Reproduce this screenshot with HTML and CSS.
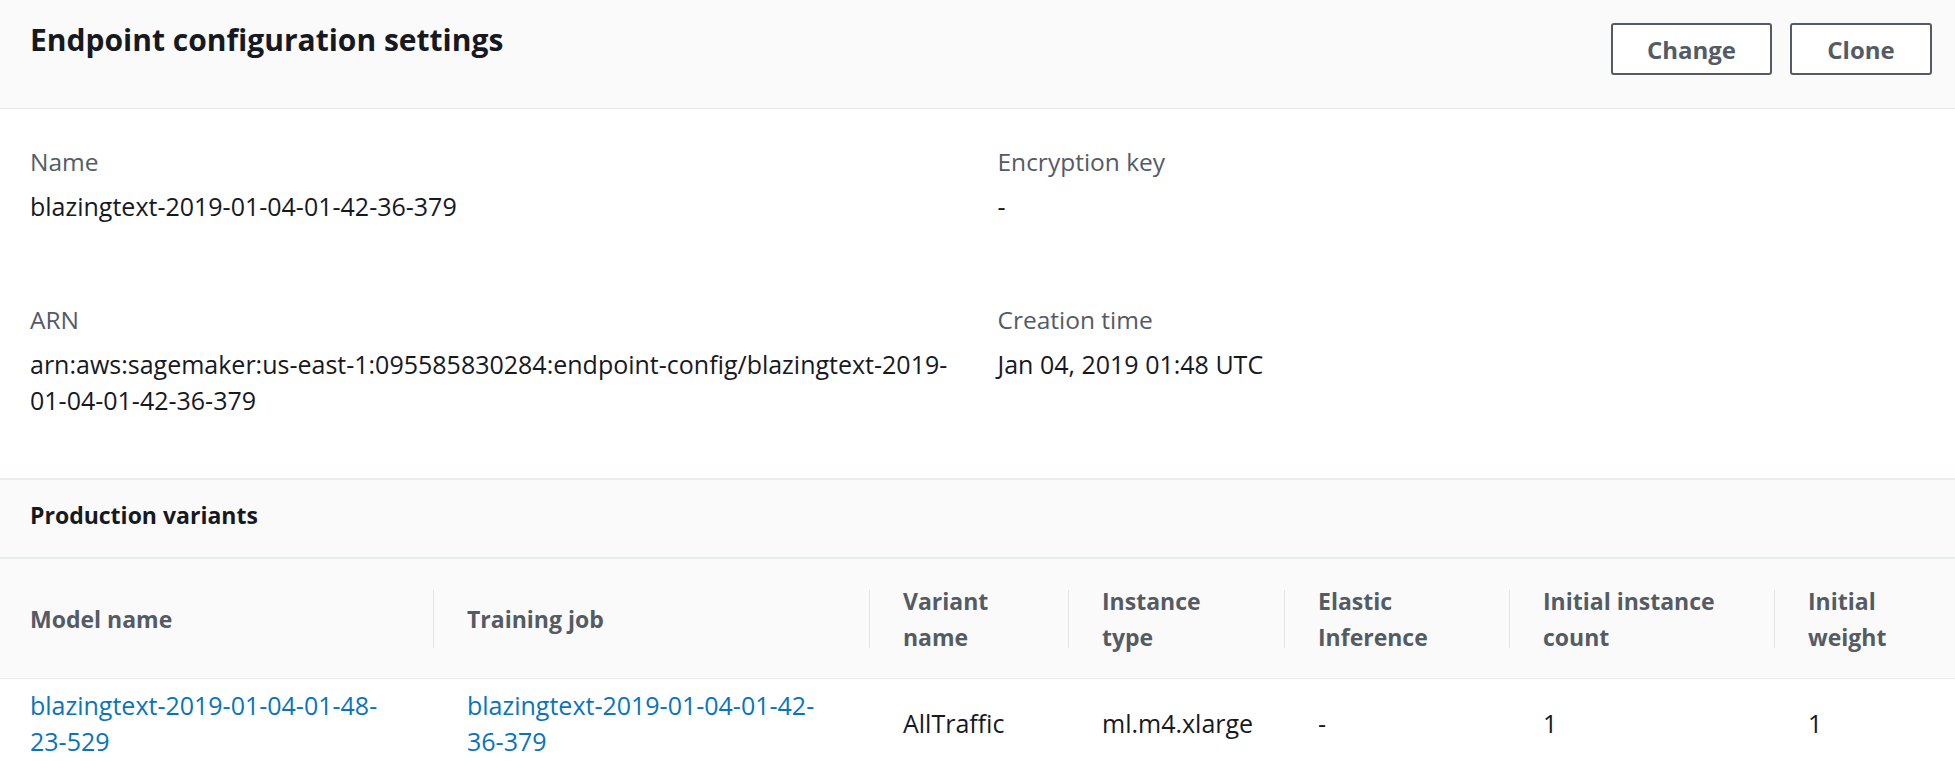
FILE: index.html
```html
<!DOCTYPE html>
<html lang="en">
<head>
<meta charset="utf-8">
<title>Endpoint configuration settings</title>
<link rel="stylesheet" href="styles.css">
</head>
<body>
<div class="panel">
  <div class="panel-header">
    <h2 class="title">Endpoint configuration settings</h2>
    <div class="actions">
      <button class="btn btn-change">Change</button>
      <button class="btn btn-clone">Clone</button>
    </div>
  </div>
  <div class="details">
    <div class="kv">
      <div class="label">Name</div>
      <div class="value">blazingtext-2019-01-04-01-42-36-379</div>
    </div>
    <div class="kv">
      <div class="label">Encryption key</div>
      <div class="value">-</div>
    </div>
    <div class="kv">
      <div class="label">ARN</div>
      <div class="value">arn:aws:sagemaker:us-east-1:095585830284:endpoint-config/blazingtext-2019-01-04-01-42-36-379</div>
    </div>
    <div class="kv">
      <div class="label">Creation time</div>
      <div class="value">Jan 04, 2019 01:48 UTC</div>
    </div>
  </div>
  <div class="section-header">Production variants</div>
  <div class="table">
    <div class="th first">Model name</div>
    <div class="th">Training job</div>
    <div class="th">Variant name</div>
    <div class="th">Instance type</div>
    <div class="th">Elastic Inference</div>
    <div class="th">Initial instance count</div>
    <div class="th">Initial weight</div>

    <div class="td first"><a class="link" href="#">blazingtext-2019-01-04-01-48-23-529</a></div>
    <div class="td"><a class="link" href="#">blazingtext-2019-01-04-01-42-36-379</a></div>
    <div class="td">AllTraffic</div>
    <div class="td">ml.m4.xlarge</div>
    <div class="td">-</div>
    <div class="td">1</div>
    <div class="td">1</div>
  </div>
</div>
</body>
</html>
```
FILE: styles.css
```css
* {
  box-sizing: border-box;
}

html, body {
  margin: 0;
  padding: 0;
  background: #ffffff;
}

body {
  font-family: "Open Sans", "Noto Sans", "Liberation Sans", sans-serif;
  font-size: 25px;
  line-height: 36px;
  color: #16191f;
}

.panel {
  width: 100%;
  overflow: hidden;
}

.panel-header {
  display: flex;
  justify-content: space-between;
  align-items: flex-start;
  height: 109px;
  background: #fafafa;
  border-bottom: 1px solid #e6e8e8;
  padding: 0 23px 0 30px;
}

.title {
  margin: 0;
  padding-top: 22px;
  font-size: 30px;
  line-height: 36px;
  font-weight: 700;
  color: #16191f;
}

.actions {
  display: flex;
  gap: 18px;
  padding-top: 23px;
}

.btn {
  height: 52px;
  padding: 0;
  background: #ffffff;
  border: 2px solid #545b64;
  border-radius: 3px;
  font-family: inherit;
  font-size: 24px;
  font-weight: 700;
  color: #545b64;
}

.btn-change {
  width: 161px;
}

.btn-clone {
  width: 142px;
}

.details {
  display: grid;
  grid-template-columns: 1fr 1fr;
  column-gap: 40px;
  row-gap: 78px;
  padding: 35px 30px 60px;
  border-bottom: 2px solid #eaeded;
}

.label {
  font-size: 24.5px;
  color: #545b64;
}

.value {
  margin-top: 8px;
  color: #16191f;
  overflow-wrap: anywhere;
}

.section-header {
  height: 79px;
  padding: 17px 30px 0;
  background: #fafafa;
  border-bottom: 2px solid #eaeded;
  font-size: 23px;
  font-weight: 700;
  color: #16191f;
}

.table {
  display: grid;
  grid-template-columns: 433px 436px 199px 216px 225px 265px 1fr;
}

.th {
  position: relative;
  display: flex;
  align-items: center;
  min-height: 120px;
  padding: 0 40px 0 34px;
  background: #fafafa;
  border-bottom: 1px solid #eaeded;
  font-size: 23px;
  font-weight: 700;
  color: #545b64;
}

.th::before {
  content: "";
  position: absolute;
  left: 0;
  top: 31px;
  height: 58px;
  border-left: 1px solid #e3e5e5;
}

.th.first::before {
  display: none;
}

.th.first,
.td.first {
  padding-left: 30px;
}

.td {
  display: flex;
  align-items: center;
  padding: 8px 20px 8px 34px;
  color: #16191f;
}

.link {
  color: #0a74ba;
  text-decoration: none;
}
```
